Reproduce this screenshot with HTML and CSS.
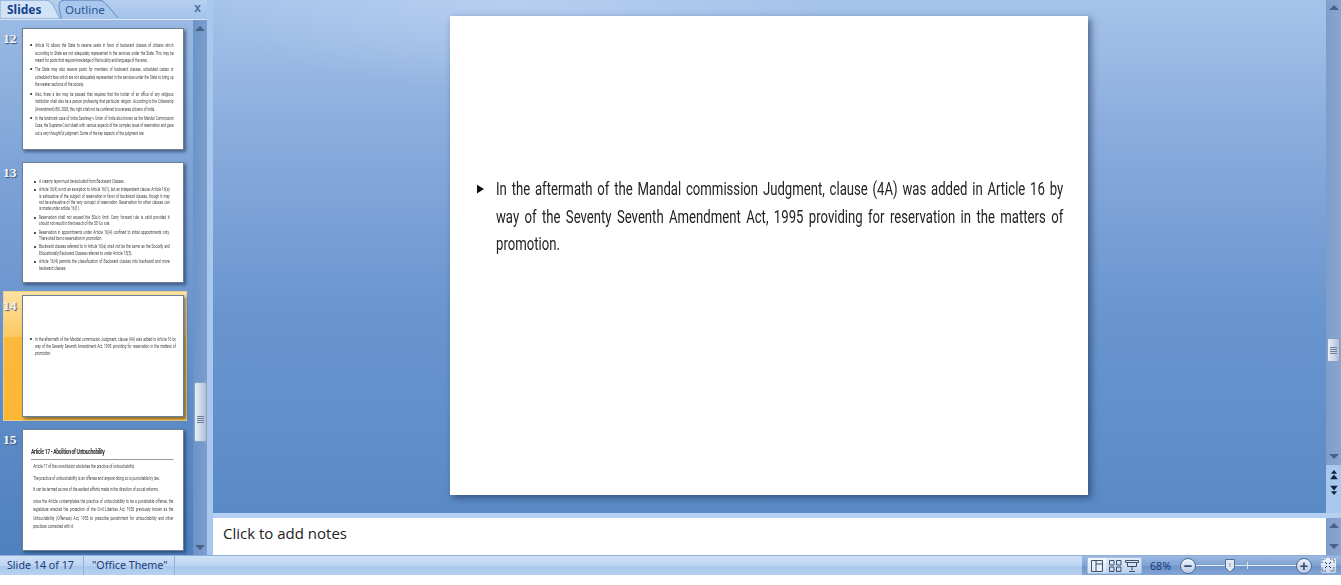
FILE: index.html
```html
<!DOCTYPE html>
<html lang="en">
<head>
    <meta charset="UTF-8">
    <title>Presentation - Normal View</title>
    <link rel="stylesheet" href="styles.css">
</head>
<body>

<div class="app">
    <div class="work">
        <!-- slide sorter pane -->
        <aside class="side">
            <div class="tabs">
                <div class="tab tab-slides">
                    <svg viewBox="0 0 62 19"><path d="M0 19V0H46C50 0 52 2 54 5L61 19Z" fill="#d3e3f7" stroke="#7ea3d2"/></svg>
                    <span>Slides</span>
                </div>
                <div class="tab tab-outline">
                    <svg viewBox="0 0 64 19"><path d="M6 19C3 10 0 0 9 0H43C47 0 49 2 51 4L63 18" fill="#a9c6ec" stroke="#5d86bb"/></svg>
                    <span>Outline</span>
                </div>
                <span class="close">x</span>
            </div>
            <div class="side-body">
                <div class="list">
                    <div class="row">
                        <span class="num">12</span>
                        <div class="thumb thumb-a">
                            <ul class="squeeze">
                                <li>Article 16 allows the State to reserve seats in favor of backward classes of citizens which according to State are not adequately represented in the services under the State. This may be meant for posts that require knowledge of the locality and language of the area.</li>
                                <li>The State may also reserve posts for members of backward classes, scheduled castes or scheduled tribes which are not adequately represented in the services under the State to bring up the weaker sections of the society.</li>
                                <li>Also, there a law may be passed that requires that the holder of an office of any religious institution shall also be a person professing that particular religion. According to the Citizenship (Amendment) Bill, 2003, this right shall not be conferred to overseas citizens of India.</li>
                                <li>In the landmark case of Indra Sawhney v Union of India also known as the Mandal Commission Case, the Supreme Court dealt with various aspects of the complex issue of reservation and gave out a very thoughtful judgment. Some of the key aspects of the judgment are:</li>
                            </ul>
                        </div>
                    </div>
                    <div class="row">
                        <span class="num">13</span>
                        <div class="thumb thumb-b">
                            <ul class="squeeze">
                                <li>A creamy layer must be excluded from Backward Classes.</li>
                                <li>Article 16(4) is not an exception to Article 16(1), but an independent clause. Article 16(a) is exhaustive of the subject of reservation in favor of backward classes, though it may not be exhaustive of the very concept of reservation. Reservation for other classes can is made under article 16(1).</li>
                                <li>Reservation shall not exceed the 50o/o limit. Carry forward rule is valid provided it should not result in the breach of the 50 %o rule.</li>
                                <li>Reservation in appointments under Article 16(4) confined to initial appointments only. There shall be no reservation in promotion.</li>
                                <li>Backward classes referred to in Article 16(a) shall not be the same as the Socially and Educationally Backward Classes referred to under Article 15(5).</li>
                                <li>Article 16(4) permits the classification of Backward classes into backward and more backward classes.</li>
                            </ul>
                        </div>
                    </div>
                    <div class="row selected">
                        <span class="num">14</span>
                        <div class="thumb thumb-c">
                            <ul class="squeeze">
                                <li>In the aftermath of the Mandal commission Judgment, clause (4A) was added in Article 16 by way of the Seventy Seventh Amendment Act, 1995 providing for reservation in the matters of promotion.</li>
                            </ul>
                        </div>
                    </div>
                    <div class="row">
                        <span class="num">15</span>
                        <div class="thumb thumb-d">
                            <div class="squeeze">
                                <h3>Article 17 - Abolition of Untouchability</h3>
                                <p>Article 17 of the constitution abolishes the practice of untouchability.</p>
                                <p>The practice of untouchability is an offense and anyone doing so is punishable by law.</p>
                                <p>It can be termed as one of the earliest efforts made in the direction of social reforms.</p>
                                <p>since the Article contemplates the practice of untouchability to be a punishable offense, the legislature enacted the protection of the Civil Liberties Act, 1955 previously known as the Untouchability (Offenses) Act, 1955 to prescribe punishment for untouchability and other practices connected with it.</p>
                            </div>
                        </div>
                    </div>
                </div>
                <div class="sbar sbar-side">
                    <i class="arr up"></i>
                    <div class="grip grip-side"><b></b><b></b><b></b><b></b></div>
                    <i class="arr down"></i>
                </div>
            </div>
        </aside>

        <!-- slide + notes -->
        <main class="main">
            <div class="stage">
                <div class="canvas">
                    <section class="slide">
                        <svg class="bullet" viewBox="0 0 8 10"><path d="M0 0L8 5L0 10Z" fill="#111"/></svg>
                        <p>In the aftermath of the Mandal commission Judgment, clause (4A) was added in Article 16 by way of the Seventy Seventh Amendment Act, 1995 providing for reservation in the matters of promotion.</p>
                    </section>
                </div>
                <div class="vcol">
                    <div class="sbar sbar-main">
                        <i class="arr up"></i>
                        <div class="grip grip-main"><b></b><b></b><b></b><b></b></div>
                        <i class="arr down"></i>
                    </div>
                    <div class="pager">
                        <svg viewBox="0 0 10 13"><path d="M5 0L9 5H1ZM5 6L10 12H0Z" fill="#10213f"/></svg>
                        <svg viewBox="0 0 10 13"><path d="M0 1H10L5 7ZM1 8H9L5 13Z" fill="#10213f"/></svg>
                    </div>
                </div>
            </div>
            <div class="notes">
                <div class="notes-text">Click to add notes</div>
                <div class="sbar sbar-notes">
                    <i class="arr up"></i>
                    <i class="arr down"></i>
                </div>
            </div>
        </main>
    </div>

    <footer class="status">
        <div class="cell cell-count">Slide 14 of 17</div>
        <div class="cell cell-theme">"Office Theme"</div>
        <div class="status-right">
            <div class="views">
                <span class="view active"><svg viewBox="0 0 14 12"><path d="M1.500.5h11v11h-11zM6 .5v11M6 4h6.500" fill="#e8eef7" stroke="#3c4f6c"/></svg></span>
                <span class="view"><svg viewBox="0 0 14 12"><path d="M1.500.5h4.500v4.500h-4.500zM8.500.5h4.500v4.500h-4.500zM1.500 7h4.500v4.500h-4.500zM8.500 7h4.500v4.500h-4.500z" fill="none" stroke="#3c4f6c"/></svg></span>
                <span class="view"><svg viewBox="0 0 14 12"><path d="M.5.5h13v2h-13zM2.500 2.500h9v4h-9zM7 6.500v4M4 11.500h6" fill="none" stroke="#3c4f6c"/></svg></span>
            </div>
            <span class="zoom-val">68%</span>
            <span class="zbtn">&#8722;</span>
            <div class="slider">
                <svg class="knob" viewBox="0 0 10 14"><path d="M.5.500h9v8l-4.500 5-4.500-5z" fill="#dfe8f4" stroke="#5b6f8d"/><path d="M5 4v4" stroke="#8a9ab2"/></svg>
                <i class="tick"></i>
            </div>
            <span class="zbtn">+</span>
            <span class="fit"><svg viewBox="0 0 14 14"><path d="M1 5V1H5M9 1H13V5M13 9V13H9M5 13H1V9" fill="none" stroke="#34486a" stroke-dasharray="1.500 1"/><path d="M4 4L6 6M10 4L8 6M4 10L6 8M10 10L8 8" stroke="#223a5e"/></svg></span>
        </div>
    </footer>
</div>

</body>
</html>
```

FILE: styles.css
```css
* {
    box-sizing: border-box;
}
html, body {
    margin: 0;
    padding: 0;
    height: 585px;
    overflow: hidden;
    background: #fff;
}
body {
    font-family: "Liberation Sans", Arial, sans-serif;
}
.app {
    height: 575px;
    display: flex;
    flex-direction: column;
}
.work {
    flex: 1;
    min-height: 0;
    display: flex;
}

/* left pane */
.side {
    width: 213px;
    display: flex;
    flex-direction: column;
    border-right: 6px solid #a9c8ee;
    background: linear-gradient(to bottom, #9dbde6 0, #7ea3d6 30%, #5f8ec9 70%, #4f80bf 100%);
}
.tabs {
    height: 20px;
    display: flex;
    align-items: flex-start;
    background: linear-gradient(to bottom, #b7d0f0, #a3c2ea);
    border-bottom: 1px solid #dbe8f8;
}
.tab {
    position: relative;
    height: 19px;
    font-size: 12px;
    font-weight: bold;
    line-height: 20px;
    font-family: "Noto Sans", sans-serif;
}
.tab svg {
    position: absolute;
    left: 0;
    top: 0;
    width: 100%;
    height: 100%;
}
.tab span {
    position: relative;
}
.tab-slides {
    width: 61px;
    padding-left: 7px;
    color: #15428b;
    z-index: 1;
}
.tab-outline {
    width: 63px;
    margin-left: -5px;
    padding-left: 9px;
    color: #2a5795;
    font-size: 11.5px;
    font-weight: normal;
}
.close {
    margin-left: auto;
    margin-right: 6px;
    font-size: 12px;
    font-weight: bold;
    line-height: 17px;
    color: #4d6f9c;
}
.side-body {
    flex: 1;
    min-height: 0;
    display: flex;
}
.list {
    flex: 1;
    min-width: 0;
    padding: 4px 0 0 3px;
    display: flex;
    flex-direction: column;
    gap: 4.2px;
    overflow: hidden;
}
.row {
    width: 184px;
    padding: 4px 0;
    display: flex;
    flex-shrink: 0;
}
.row.selected {
    background: linear-gradient(to bottom, #fde3a4 0, #fdc860 35%, #fcb93c 36%, #fbb734 100%);
    box-shadow: inset 0 0 0 1px #f1cf86;
}
.num {
    width: 19px;
    padding-top: 5px;
    font-family: "Liberation Serif", serif;
    font-size: 13.5px;
    font-weight: bold;
    line-height: 12px;
    color: #f2f5fa;
    text-shadow: 1px 1px 1px #3e5475;
}
.thumb {
    width: 162px;
    height: 121.5px;
    background: #fff;
    border: 1px solid #6f7f93;
    box-shadow: 2px 2px 3px rgba(20, 40, 70, .55);
    font-family: Roboto, sans-serif;
    font-size: 4.57px;
    color: #444;
    text-align: justify;
    overflow: hidden;
}
/* the source font is a condensed face, Roboto squeezed gets close */
.squeeze {
    transform: scaleX(.73);
    transform-origin: 0 0;
    filter: blur(.25px);
}
.thumb ul {
    margin: 0;
    padding: 0;
    list-style: none;
}
.thumb li {
    position: relative;
    margin-bottom: 1.5px;
}
.thumb li::before {
    content: "";
    position: absolute;
    left: -7px;
    top: 2px;
    width: 2.700px;
    height: 2px;
    border-radius: 50%;
    background: #333;
}
.thumb-a {
    padding: 13px 0 0 12px;
    line-height: 7.6px;
}
.thumb-a .squeeze {
    width: 198px;
    transform: scaleX(.7);
}
.thumb-b {
    padding: 16px 0 0 16px;
    line-height: 6.4px;
}
.thumb-b .squeeze {
    width: 179px;
}
.thumb-b li {
    margin-bottom: 2px;
}
.thumb-c {
    padding: 40px 0 0 12px;
    line-height: 7px;
}
.thumb-c .squeeze {
    width: 193px;
}
.thumb-d {
    padding: 18px 0 0 8px;
    line-height: 8.5px;
}
.thumb-d .squeeze {
    width: 195px;
}
.thumb-d h3 {
    margin: 0 0 3px;
    padding-bottom: 2px;
    border-bottom: 1px solid #999;
    font-size: 7px;
    letter-spacing: -.5px;
    line-height: 9px;
    color: #333;
}
.thumb-d p {
    margin: 0 0 3px 3px;
}

/* scrollbars */
.sbar {
    width: 14px;
    display: flex;
    flex-direction: column;
    align-items: center;
    background: linear-gradient(to right, #6d93c8, #7c9dcd);
}
.sbar-main {
    width: 15px;
    flex: 1;
    padding: 5px 0 6px;
    background: linear-gradient(to right, #7d9dcb, #8aa6d0);
}
.sbar-notes {
    width: 15px;
    justify-content: space-between;
    padding: 5px 0 6px;
    background: linear-gradient(to right, #7d9dcb, #8aa6d0);
}
.arr {
    display: block;
    width: 0;
    height: 0;
    border-left: 5px solid transparent;
    border-right: 5px solid transparent;
    flex-shrink: 0;
}
.arr.up {
    border-bottom: 5px solid #4a6288;
}
.arr.down {
    border-top: 5px solid #4a6288;
}
.sbar-side {
    padding: 6px 0 5px;
}
.sbar-side .arr.down, .sbar-main .arr.down {
    margin-top: auto;
}
.grip {
    width: 13px;
    display: flex;
    flex-direction: column;
    align-items: center;
    justify-content: center;
    gap: 1px;
    background: linear-gradient(to right, #e9eef6, #c7d3e6 60%, #aebed8);
    border: 1px solid #8b9fbf;
    border-radius: 2px;
}
.grip b {
    display: block;
    width: 7px;
    height: 1px;
    background: #6c7e99;
}
.grip-side {
    height: 60px;
    margin-top: 351px;
    justify-content: flex-end;
    padding-bottom: 18px;
}
.grip-main {
    height: 24px;
    margin-top: 328px;
}

/* main area */
.main {
    flex: 1;
    min-width: 0;
    display: flex;
    flex-direction: column;
}
.stage {
    flex: 1;
    min-height: 0;
    display: flex;
}
.canvas {
    flex: 1;
    min-width: 0;
    padding: 16px 1px 0 0;
    display: flex;
    justify-content: center;
    background:
        radial-gradient(ellipse 320px 90px at 300px 0, rgba(215, 230, 250, .35), transparent),
        linear-gradient(to bottom, #a6c3ea 0, #8bacdd 25%, #6a96cf 60%, #5a8ac6 100%);
}
.slide {
    width: 638px;
    height: 479px;
    padding: 159px 0 0 27px;
    display: flex;
    gap: 12px;
    background: #fff;
    box-shadow: 3px 3px 7px rgba(25, 45, 80, .6);
}
.bullet {
    flex-shrink: 0;
    width: 7px;
    height: 10px;
    margin-top: 9px;
}
.slide p {
    flex-shrink: 0;
    width: 777px;
    height: 90px;
    margin: 0 -210px 0 0;
    font-family: Roboto, sans-serif;
    font-size: 18px;
    line-height: 27.5px;
    color: #222;
    text-align: justify;
    transform: scaleX(.73);
    transform-origin: 0 0;
    filter: blur(.3px);
}
.vcol {
    width: 15px;
    display: flex;
    flex-direction: column;
}
.pager {
    height: 48px;
    padding-top: 5px;
    display: flex;
    flex-direction: column;
    align-items: center;
    gap: 5px;
    background: #a9c8ee;
}
.pager svg {
    width: 8px;
    height: 10px;
}
.notes {
    height: 42px;
    display: flex;
    border-top: 5px solid #b5d0f0;
}
.notes-text {
    flex: 1;
    padding: 4px 10px;
    background: #fff;
    font-family: "Open Sans", sans-serif;
    font-size: 15px;
    line-height: 22px;
    color: #222;
}

/* status bar */
.status {
    height: 20px;
    display: flex;
    background: linear-gradient(to bottom, #cfe1f7, #bcd4f2 50%, #a9c7ec 51%, #b6d0f0);
    border-top: 1px solid #8eaed8;
    font-family: "Noto Sans", sans-serif;
    font-size: 10.7px;
    line-height: 18px;
    color: #1f3d78;
}
.cell {
    border-right: 1px solid #92b2dc;
}
.cell-count {
    width: 84px;
    padding-left: 7px;
}
.cell-theme {
    width: 91px;
    padding-left: 8px;
}
.status-right {
    width: 259px;
    margin-left: auto;
    padding-left: 5px;
    display: flex;
    align-items: center;
    background: linear-gradient(to bottom, #9ab9e2, #7fa2d3 50%, #6d93c9 51%, #84a6d6);
}
.views {
    width: 55px;
    height: 17px;
    flex-shrink: 0;
    display: flex;
    border-radius: 2px;
    background: linear-gradient(to bottom, #e3edf9, #bcd2ee);
    border: 1px solid #a5bfdf;
}
.view {
    flex: 1;
    display: flex;
    align-items: center;
    justify-content: center;
}
.view.active {
    background: linear-gradient(to bottom, #f4f8fd, #d3e2f5);
}
.view svg {
    width: 14px;
    height: 12px;
}
.zoom-val {
    margin-left: 8px;
    width: 30px;
    flex-shrink: 0;
    color: #17367a;
}
.zbtn {
    width: 16px;
    height: 16px;
    flex-shrink: 0;
    border-radius: 50%;
    border: 1px solid #4f6a92;
    background: linear-gradient(to bottom, #eef4fb, #b8cbe5);
    font-family: "Liberation Sans", sans-serif;
    font-size: 15px;
    font-weight: bold;
    line-height: 13px;
    text-align: center;
    color: #3b506f;
}
.slider {
    width: 100px;
    height: 1px;
    flex-shrink: 0;
    background: #e4edf8;
    position: relative;
}
.knob {
    position: absolute;
    left: 29px;
    top: -6px;
    width: 10px;
    height: 14px;
}
.tick {
    position: absolute;
    left: 51px;
    top: -3px;
    width: 1px;
    height: 7px;
    background: #dce7f5;
}
.fit {
    width: 15px;
    height: 15px;
    flex-shrink: 0;
    margin-left: 9px;
    display: flex;
    border-radius: 2px;
    background: linear-gradient(to bottom, #eef3fb, #c6d6ec);
}
.fit svg {
    width: 14px;
    height: 14px;
}
```
